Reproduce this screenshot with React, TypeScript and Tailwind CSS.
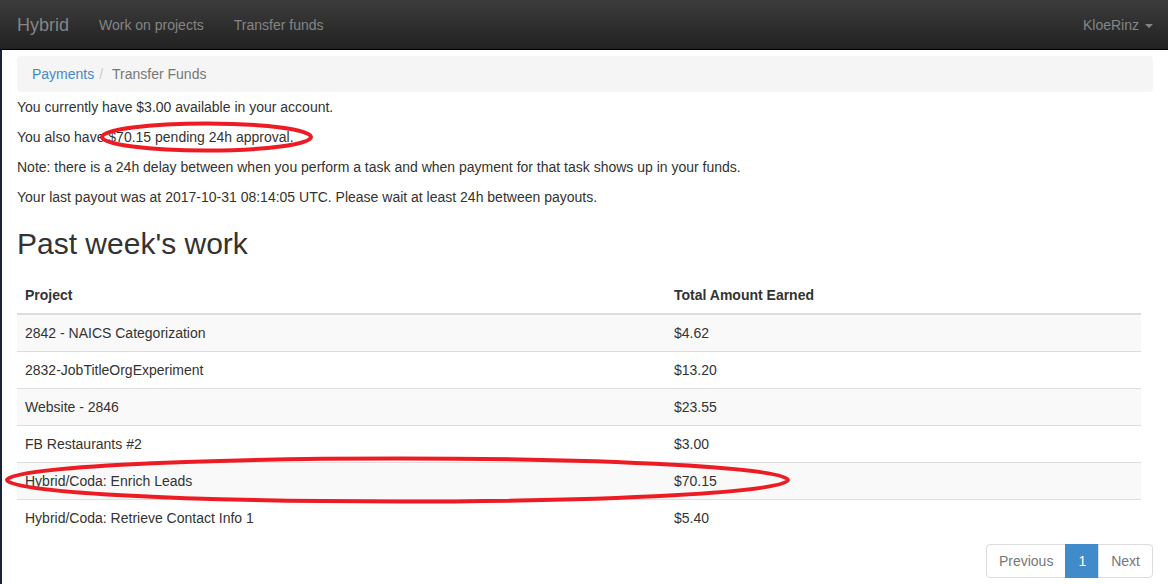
import React from "react";

const rows: [string, string][] = [
  ["2842 - NAICS Categorization", "$4.62"],
  ["2832-JobTitleOrgExperiment", "$13.20"],
  ["Website - 2846", "$23.55"],
  ["FB Restaurants #2", "$3.00"],
  ["Hybrid/Coda: Enrich Leads", "$70.15"],
  ["Hybrid/Coda: Retrieve Contact Info 1", "$5.40"],
];

export default function App() {
  return (
    <div className="relative min-h-[584px] w-[1168px] bg-white font-['Liberation_Sans',Arial,sans-serif] text-[14px] leading-[20px] text-[#333]">
      <nav className="flex h-[50px] items-center border-b border-black bg-linear-to-b from-[#3c3c3c] to-[#222222] pt-px text-[#858585]">
        <span className="pl-[17px] pr-[15px] text-[18px] leading-[20px] text-[#858585]">Hybrid</span>
        <span className="px-[15px]">Work on projects</span>
        <span className="px-[15px]">Transfer funds</span>
        <div className="ml-auto flex items-center pr-[15px]">
          <span>KloeRinz</span>
          <span className="ml-[6px] mt-[2px] h-0 w-0 border-x-[4px] border-t-[4px] border-x-transparent border-t-[#858585]" />
        </div>
      </nav>
      <div className="flex min-h-[534px]">
        <div className="w-[2px] shrink-0 bg-[#16233a]" />
        <main className="flex-1 px-[15px]">
          <div className="mb-[5px] mt-[6px] flex h-[36px] items-center rounded-[4px] bg-[#f5f5f5] px-[15px]">
            <span className="text-[#428bca]">Payments</span>
            <span className="px-[5px] text-[#ccc]">/&nbsp;</span>
            <span className="text-[#777]">Transfer Funds</span>
          </div>
          <p className="mb-[10px]">You currently have $3.00 available in your account.</p>
          <p className="mb-[10px]">You also have $70.15 pending 24h approval.</p>
          <p className="mb-[10px]">
            Note: there is a 24h delay between when you perform a task and when payment for that task shows up in your funds.
          </p>
          <p>Your last payout was at 2017-10-31 08:14:05 UTC. Please wait at least 24h between payouts.</p>
          <h2 className="mt-[20px] text-[30px] font-normal leading-[33px]">Past week's work</h2>
          <table className="mt-[17px] w-[1124px] border-collapse">
            <thead>
              <tr>
                <th className="w-[649px] border-b-2 border-[#ddd] px-[8px] py-[8px] text-left font-bold">Project</th>
                <th className="border-b-2 border-[#ddd] px-[8px] py-[8px] text-left font-bold">Total Amount Earned</th>
              </tr>
            </thead>
            <tbody>
              {rows.map(([p, a], i) => (
                <tr key={p} className={i % 2 === 0 ? "bg-[#f9f9f9]" : "bg-white"}>
                  <td className="border-t border-[#ddd] px-[8px] py-[8px]">{p}</td>
                  <td className="border-t border-[#ddd] px-[8px] py-[8px]">{a}</td>
                </tr>
              ))}
            </tbody>
          </table>
          <div className="mt-[8px] flex justify-end">
            <span className="rounded-l-[4px] border border-[#ddd] bg-white px-[12px] py-[6px] text-[#777]">Previous</span>
            <span className="-ml-px border border-[#428bca] bg-[#428bca] px-[12px] py-[6px] text-white">1</span>
            <span className="-ml-px rounded-r-[4px] border border-[#ddd] bg-white px-[12px] py-[6px] text-[#777]">Next</span>
          </div>
        </main>
      </div>
      <svg className="pointer-events-none absolute left-0 top-0" width="1168" height="584" viewBox="0 0 1168 584">
        <ellipse cx="206.5" cy="137" rx="104.5" ry="13.5" fill="none" stroke="#ed1c24" strokeWidth="4" />
        <ellipse cx="397.5" cy="480" rx="390.5" ry="21.5" fill="none" stroke="#ed1c24" strokeWidth="4" />
      </svg>
    </div>
  );
}
